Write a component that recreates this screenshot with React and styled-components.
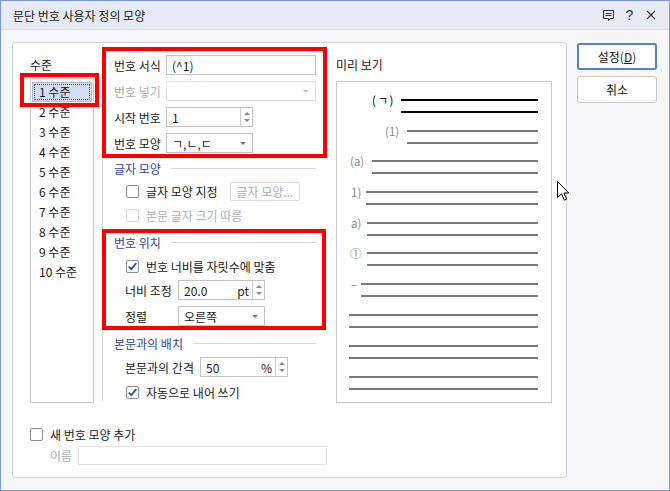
import React from 'react';
import styled, { createGlobalStyle } from 'styled-components';

const Global = createGlobalStyle`
  html, body { margin: 0; padding: 0; background: #fff; }
  body { font-family: "Noto Sans CJK KR", "Noto Sans", sans-serif; font-size: 12px; color: #1a1a1a; }
  * { box-sizing: border-box; }
`;

const Window = styled.div`
  position: relative;
  width: 670px;
  height: 491px;
  border: 1px solid #7b97d8;
  background: #f7f7f9;
  display: flex;
  flex-direction: column;
  overflow: hidden;
`;

const TitleBar = styled.div`
  flex: none;
  height: 29px;
  background: #e7ebf5;
  border-bottom: 1px solid #d3d9e8;
  display: flex;
  align-items: center;
  padding: 0 8px 0 12px;
`;

const Title = styled.div`
  flex: 1;
  font-size: 12px;
  color: #1a1a1a;
`;

const TitleIcon = styled.div`
  width: 21px;
  height: 20px;
  display: flex;
  align-items: center;
  justify-content: center;
  color: #333;
  font-size: 14px;
  font-family: "Liberation Sans", sans-serif;
`;

const Body = styled.div`
  flex: 1;
  display: flex;
  padding: 12px 0 0 11px;
`;

const Panel = styled.div`
  width: 555px;
  height: 436px;
  border: 1px solid #d2d2d2;
  border-radius: 3px;
  background: #fff;
  display: flex;
  flex-direction: column;
  padding-top: 4px;
`;

const TopArea = styled.div`
  display: flex;
`;

const LevelCol = styled.div`
  width: 89px;
  padding-left: 17px;
  display: flex;
  flex-direction: column;
`;

const ColLabel = styled.div`
  height: 20px;
  line-height: 20px;
  margin-top: ${p => p.$mt ?? 8}px;
  color: #1a1a1a;
`;

const ListBox = styled.div`
  margin-top: 3px;
  width: 64px;
  height: 325px;
  border: 1px solid #cdcdcd;
  background: #fff;
  padding: 3px 1px 0 1px;
`;

const LevelItem = styled.div`
  height: 20px;
  line-height: 18px;
  padding-left: 6px;
  border: 1px solid ${p => (p.$selected ? '#a9b8e2' : 'transparent')};
  background: ${p => (p.$selected ? '#d5ddf3' : 'transparent')};
  outline: ${p => (p.$selected ? '1px dotted #555' : 'none')};
  outline-offset: -3px;
  color: #1a1a1a;
  white-space: nowrap;
`;

const OptionsCol = styled.div`
  width: 224px;
  height: 354px;
  border-left: 1px solid #d6d6d6;
  padding: 0 10px 0 11px;
  display: flex;
  flex-direction: column;
`;

const Row = styled.div`
  display: flex;
  align-items: center;
  height: ${p => p.$h || 20}px;
  margin-top: ${p => p.$mt || 0}px;
  padding-left: ${p => p.$indent || 0}px;
`;

const FieldLabel = styled.span`
  width: ${p => p.$w}px;
  flex: none;
  color: ${p => (p.$disabled ? '#a9a9a9' : '#1a1a1a')};
  white-space: nowrap;
`;

const Field = styled.div`
  position: relative;
  width: ${p => p.$w}px;
  height: ${p => p.$h || 20}px;
  border: 1px solid ${p => (p.$disabled ? '#e1e1e1' : '#c4c4c4')};
  background: #fff;
  display: flex;
  align-items: center;
  padding-left: 5px;
  color: #1a1a1a;
  flex: none;
`;

const FieldText = styled.span`
  flex: 1;
  white-space: nowrap;
`;

const Unit = styled.span`
  margin-right: 3px;
`;

const ComboArrow = styled.span`
  width: 0;
  height: 0;
  margin-right: 6px;
  border-left: 3px solid transparent;
  border-right: 3px solid transparent;
  border-top: 3px solid ${p => (p.$disabled ? '#c8c8c8' : '#777')};
`;

const SpinButtons = styled.div`
  width: 12px;
  align-self: stretch;
  border-left: 1px solid #d0d0d0;
  display: flex;
  flex-direction: column;
  align-items: center;
  justify-content: space-around;
  padding: 2px 0;
`;

const SpinTri = styled.span`
  width: 0;
  height: 0;
  border-left: 3px solid transparent;
  border-right: 3px solid transparent;
  ${p => (p.$up ? 'border-bottom: 3px solid #888;' : 'border-top: 3px solid #888;')}
`;

const SectionHead = styled.div`
  display: flex;
  align-items: center;
  height: 16px;
  margin-top: ${p => p.$mt}px;
  color: #2f4394;
  white-space: nowrap;
  &::after {
    content: '';
    flex: 1;
    height: 1px;
    margin-left: 10px;
    background: #d6d6d6;
  }
`;

const Box = styled.span`
  width: 13px;
  height: 13px;
  flex: none;
  border: 1px solid ${p => (p.$disabled ? '#dadada' : '#8e8e8e')};
  border-radius: 2px;
  background: #fff;
  display: flex;
  align-items: center;
  justify-content: center;
`;

const CheckLabel = styled.span`
  margin-left: 7px;
  width: ${p => (p.$w ? `${p.$w}px` : 'auto')};
  flex: none;
  color: ${p => (p.$disabled ? '#b0b0b0' : '#1a1a1a')};
  white-space: nowrap;
`;

const GhostButton = styled.div`
  width: 70px;
  height: 19px;
  border: 1px solid #dcdcdc;
  border-radius: 2px;
  color: #ababab;
  display: flex;
  align-items: center;
  justify-content: center;
  white-space: nowrap;
`;

const PreviewCol = styled.div`
  padding: 8px 0 0 10px;
  display: flex;
  flex-direction: column;
`;

const PreviewBox = styled.div`
  margin-top: 6px;
  width: 216px;
  height: 322px;
  border: 1px solid #cbcbcb;
  background: #fff;
  display: flex;
  flex-direction: column;
`;

const Entry = styled.div`
  display: flex;
  height: ${p => p.$h}px;
  flex: none;
  padding-left: ${p => p.$pl}px;
  padding-right: 13px;
`;

const EntryLabel = styled.span`
  width: ${p => p.$w}px;
  flex: none;
  margin-top: 11px;
  height: 14px;
  line-height: 14px;
  font-size: 11.5px;
  color: ${p => (p.$dark ? '#000' : '#8a8a8a')};
  letter-spacing: ${p => (p.$dark ? '1.5px' : '0')};
  white-space: nowrap;
`;

const LineStack = styled.div`
  flex: 1;
  display: flex;
  flex-direction: column;
  gap: 10px;
  padding-top: 17px;
`;

const Line = styled.div`
  height: 2px;
  flex: none;
  background: ${p => (p.$dark ? '#000' : '#7a7a7a')};
`;

const BottomArea = styled.div`
  padding-left: 17px;
  display: flex;
  flex-direction: column;
`;

const ButtonCol = styled.div`
  margin-left: 10px;
  margin-top: 1px;
  display: flex;
  flex-direction: column;
  gap: 6px;
`;

const DialogButton = styled.div`
  width: 80px;
  height: 27px;
  border: ${p => (p.$primary ? '2px solid #5580d8' : '1px solid #c8c8c8')};
  border-radius: 3px;
  background: #fff;
  display: flex;
  align-items: center;
  justify-content: center;
  color: #1a1a1a;
  font-size: 12px;
`;

const RedBox = styled.div`
  position: absolute;
  border: 4px solid #ff0000;
  pointer-events: none;
`;

const Cursor = styled.svg`
  position: absolute;
  left: 556px;
  top: 180px;
`;

const Check = () => (
  <svg width="11" height="11" viewBox="0 0 11 11">
    <path d="M1.8 5.6 L4.3 8.2 L9.3 2.2" fill="none" stroke="#2b57a8" strokeWidth="1.8" />
  </svg>
);

const CheckBox = ({ checked, disabled }) => (
  <Box $disabled={disabled}>{checked && <Check />}</Box>
);

const Combo = ({ w, value, disabled }) => (
  <Field $w={w} $disabled={disabled}>
    <FieldText>{value}</FieldText>
    <ComboArrow $disabled={disabled} />
  </Field>
);

const Spin = ({ w, value, unit, h }) => (
  <Field $w={w} $h={h}>
    <FieldText>{value}</FieldText>
    {unit && <Unit>{unit}</Unit>}
    <SpinButtons>
      <SpinTri $up />
      <SpinTri />
    </SpinButtons>
  </Field>
);

const levels = ['1 수준', '2 수준', '3 수준', '4 수준', '5 수준', '6 수준', '7 수준', '8 수준', '9 수준', '10 수준'];

const preview = [
  { label: '(ㄱ)', lx: 372, x: 401, dark: true, h: 31 },
  { label: '(1)', lx: 385, x: 407, h: 30 },
  { label: '(a)', lx: 350, x: 372, h: 31 },
  { label: '1)', lx: 351, x: 366, h: 31 },
  { label: 'a)', lx: 351, x: 367, h: 30 },
  { label: '①', lx: 350, x: 367, h: 31 },
  { label: '–', lx: 351, x: 361, h: 31 },
  { x: 349, h: 31 },
  { x: 349, h: 31 },
  { x: 349, h: 31 },
];

export default function App() {
  return (
    <>
      <Global />
      <Window>
        <TitleBar>
          <Title>문단 번호 사용자 정의 모양</Title>
          <TitleIcon>
            <svg width="13" height="13" viewBox="0 0 13 13">
              <path d="M1.5 1.5 H11.5 V9.5 H8 L6.5 11.5 L6.5 9.5 H1.5 Z" fill="none" stroke="#333" strokeWidth="1" />
              <path d="M3.5 4.5 H9.5 M3.5 6.5 H9.5" stroke="#333" strokeWidth="1" />
            </svg>
          </TitleIcon>
          <TitleIcon>?</TitleIcon>
          <TitleIcon>
            <svg width="10" height="10" viewBox="0 0 10 10">
              <path d="M1 1 L9 9 M9 1 L1 9" stroke="#333" strokeWidth="1.2" />
            </svg>
          </TitleIcon>
        </TitleBar>
        <Body>
          <Panel>
            <TopArea>
              <LevelCol>
                <ColLabel>수준</ColLabel>
                <ListBox>
                  {levels.map((l, i) => (
                    <LevelItem key={l} $selected={i === 0}>{l}</LevelItem>
                  ))}
                </ListBox>
              </LevelCol>
              <OptionsCol>
                <Row $mt={8}>
                  <FieldLabel $w={52}>번호 서식</FieldLabel>
                  <Field $w={150}><FieldText>(^1)</FieldText></Field>
                </Row>
                <Row $mt={6}>
                  <FieldLabel $w={52} $disabled>번호 넣기</FieldLabel>
                  <Combo w={150} value="" disabled />
                </Row>
                <Row $mt={6}>
                  <FieldLabel $w={52}>시작 번호</FieldLabel>
                  <Spin w={87} value="1" />
                </Row>
                <Row $mt={6}>
                  <FieldLabel $w={52}>번호 모양</FieldLabel>
                  <Combo w={87} value="ㄱ,ㄴ,ㄷ" />
                </Row>

                <SectionHead $mt={7}>글자 모양</SectionHead>
                <Row $mt={6} $h={18} $indent={12}>
                  <CheckBox />
                  <CheckLabel $w={84}>글자 모양 지정</CheckLabel>
                  <GhostButton>글자 모양...</GhostButton>
                </Row>
                <Row $mt={7} $h={17} $indent={12}>
                  <CheckBox disabled />
                  <CheckLabel $disabled>본문 글자 크기 따름</CheckLabel>
                </Row>

                <SectionHead $mt={10}>번호 위치</SectionHead>
                <Row $mt={8} $h={17} $indent={12}>
                  <CheckBox checked />
                  <CheckLabel>번호 너비를 자릿수에 맞춤</CheckLabel>
                </Row>
                <Row $mt={5} $indent={11}>
                  <FieldLabel $w={53}>너비 조정</FieldLabel>
                  <Spin w={87} value="20.0" unit="pt" />
                </Row>
                <Row $mt={6} $indent={11}>
                  <FieldLabel $w={53}>정렬</FieldLabel>
                  <Combo w={87} value="오른쪽" />
                </Row>

                <SectionHead $mt={9}>본문과의 배치</SectionHead>
                <Row $mt={6} $indent={11}>
                  <FieldLabel $w={75}>본문과의 간격</FieldLabel>
                  <Spin w={88} value="50" unit="%" />
                </Row>
                <Row $mt={7} $h={18} $indent={12}>
                  <CheckBox checked />
                  <CheckLabel>자동으로 내어 쓰기</CheckLabel>
                </Row>
              </OptionsCol>
              <PreviewCol>
                <ColLabel $mt={0}>미리 보기</ColLabel>
                <PreviewBox>
                  {preview.map((p, i) => (
                    <Entry key={i} $h={p.h} $pl={(p.lx || p.x) - 337}>
                      <EntryLabel $w={p.label ? p.x - p.lx : 0} $dark={p.dark}>{p.label}</EntryLabel>
                      <LineStack>
                        <Line $dark={p.dark} />
                        <Line $dark={p.dark} />
                      </LineStack>
                    </Entry>
                  ))}
                </PreviewBox>
              </PreviewCol>
            </TopArea>
            <BottomArea>
              <Row $mt={22} $h={18}>
                <CheckBox />
                <CheckLabel>새 번호 모양 추가</CheckLabel>
              </Row>
              <Row $mt={3} $h={19} $indent={20}>
                <FieldLabel $w={28} $disabled>이름</FieldLabel>
                <Field $w={249} $h={19} $disabled />
              </Row>
            </BottomArea>
          </Panel>
          <ButtonCol>
            <DialogButton $primary>설정(<u>D</u>)</DialogButton>
            <DialogButton>취소</DialogButton>
          </ButtonCol>
        </Body>
        <RedBox style={{ left: 19, top: 72, width: 79, height: 34 }} />
        <RedBox style={{ left: 101, top: 46, width: 225, height: 111 }} />
        <RedBox style={{ left: 101, top: 228, width: 224, height: 101 }} />
        <Cursor width="13" height="21" viewBox="0 0 13 21">
          <path d="M0.5 0.5 L0.5 16.5 L4.5 12.8 L7.3 19.2 L9.6 18.2 L6.9 12 L11.8 12 Z" fill="#fff" stroke="#000" strokeWidth="1" strokeLinejoin="miter" />
        </Cursor>
      </Window>
    </>
  );
}
